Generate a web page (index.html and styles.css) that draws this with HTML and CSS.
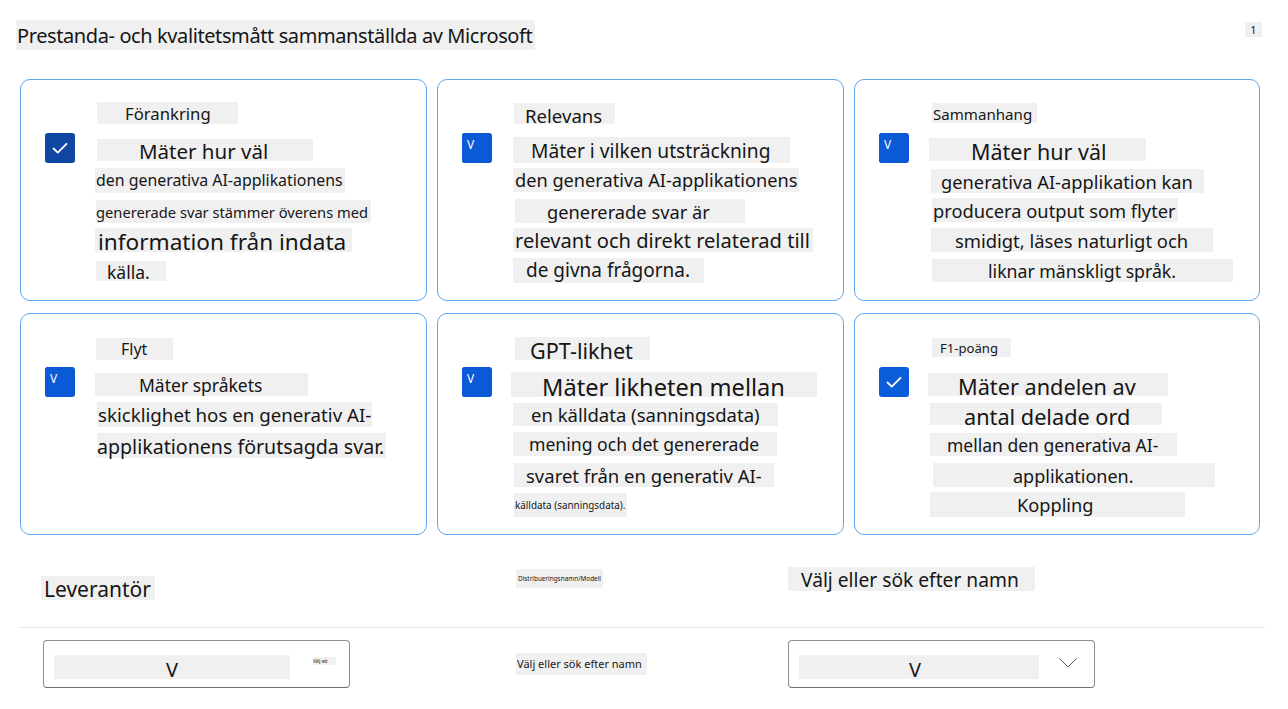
FILE: index.html
```html
<!DOCTYPE html>
<html lang="sv">
<head>
<meta charset="utf-8">
<title>Prestanda- och kvalitetsmått</title>
<link rel="stylesheet" href="styles.css">
</head>
<body>
<div class="page">
  <header class="head">
    <h1 class="title">Prestanda- och kvalitetsmått sammanställda av Microsoft</h1>
    <span class="pgnum">1</span>
  </header>

  <main class="cards">
    <article class="card c1">
      <span class="cb cb-dark"><svg width="30" height="30" viewBox="0 0 30 30"><path d="M8.5 15.5 L12.8 19.6 L21.5 10.8" fill="none" stroke="#fff" stroke-width="1.8" stroke-linecap="round" stroke-linejoin="round"/></svg></span>
      <div class="lines">
        <span class="ln l1">Förankring</span>
        <span class="ln l2">Mäter hur väl</span>
        <span class="ln l3">den generativa AI-applikationens</span>
        <span class="ln l4">genererade svar stämmer överens med</span>
        <span class="ln l5">information från indata</span>
        <span class="ln l6">källa.</span>
      </div>
    </article>

    <article class="card c2">
      <span class="cb cb-v"><span class="cb-in">V</span></span>
      <div class="lines">
        <span class="ln l1">Relevans</span>
        <span class="ln l2">Mäter i vilken utsträckning</span>
        <span class="ln l3">den generativa AI-applikationens</span>
        <span class="ln l4">genererade svar är</span>
        <span class="ln l5">relevant och direkt relaterad till</span>
        <span class="ln l6">de givna frågorna.</span>
      </div>
    </article>

    <article class="card c3">
      <span class="cb cb-v"><span class="cb-in">V</span></span>
      <div class="lines">
        <span class="ln l1">Sammanhang</span>
        <span class="ln l2">Mäter hur väl</span>
        <span class="ln l3">generativa AI-applikation kan</span>
        <span class="ln l4">producera output som flyter</span>
        <span class="ln l5">smidigt, läses naturligt och</span>
        <span class="ln l6">liknar mänskligt språk.</span>
      </div>
    </article>

    <article class="card c4">
      <span class="cb cb-v"><span class="cb-in">V</span></span>
      <div class="lines">
        <span class="ln l1">Flyt</span>
        <span class="ln l2">Mäter språkets</span>
        <span class="ln l3">skicklighet hos en generativ AI-</span>
        <span class="ln l4">applikationens förutsagda svar.</span>
      </div>
    </article>

    <article class="card c5">
      <span class="cb cb-v"><span class="cb-in">V</span></span>
      <div class="lines">
        <span class="ln l1">GPT-likhet</span>
        <span class="ln l2">Mäter likheten mellan</span>
        <span class="ln l3">en källdata (sanningsdata)</span>
        <span class="ln l4">mening och det genererade</span>
        <span class="ln l5">svaret från en generativ AI-</span>
        <span class="ln l6">källdata (sanningsdata).</span>
      </div>
    </article>

    <article class="card c6">
      <span class="cb cb-bright"><svg width="30" height="30" viewBox="0 0 30 30"><path d="M8.5 15.5 L12.8 19.6 L21.5 10.8" fill="none" stroke="#fff" stroke-width="1.8" stroke-linecap="round" stroke-linejoin="round"/></svg></span>
      <div class="lines">
        <span class="ln l1">F1-poäng</span>
        <span class="ln l2">Mäter andelen av</span>
        <span class="ln l3">antal delade ord</span>
        <span class="ln l4">mellan den generativa AI-</span>
        <span class="ln l5">applikationen.</span>
        <span class="ln l6">Koppling</span>
      </div>
    </article>
  </main>

  <section class="filters">
    <div class="frow frow1">
      <span class="prov-label">Leverantör</span>
      <span class="dist-label">Distribueringsnamn/Modell</span>
      <span class="pick-label">Välj eller sök efter namn</span>
    </div>
    <div class="divider"></div>
    <div class="frow frow2">
      <div class="dd dd-left">
        <span class="dd-val">V</span>
        <span class="dd-tiny">Välj ett</span>
      </div>
      <span class="mid-label">Välj eller sök efter namn</span>
      <div class="dd dd-right">
        <span class="dd-val">V</span>
        <svg class="chev" width="20" height="12" viewBox="0 0 20 12"><path d="M1.5 1.5 L10 10 L18.5 1.5" fill="none" stroke="#555" stroke-width="1"/></svg>
      </div>
    </div>
  </section>
</div>
</body>
</html>
```

FILE: styles.css
```css
* { box-sizing: border-box; }

html, body {
  margin: 0;
  padding: 0;
  background: #ffffff;
}

body {
  font-family: "Noto Sans", "Open Sans", "DejaVu Sans", sans-serif;
  color: #161616;
  width: 1288px;
  height: 709px;
  overflow: hidden;
}

.page {
  width: 1288px;
}

/* header */
.head {
  display: flex;
  justify-content: space-between;
  align-items: flex-start;
  padding: 20px 26px 0 16px;
}

.title {
  margin: 0;
  height: 30px;
  line-height: 32px;
  font-size: 20px;
  font-weight: 400;
  letter-spacing: -0.4px;
  background: #f0f0f0;
  padding: 0 1px;
  width: 519px;
  white-space: nowrap;
}

.pgnum {
  margin-top: 2px;
  width: 17px;
  height: 15px;
  line-height: 15px;
  font-size: 11px;
  text-align: center;
  background: #f0f0f0;
}

/* cards */
.cards {
  margin: 29px 0 0 20px;
  width: 1240px;
  display: grid;
  grid-template-columns: 407px 407px 406px;
  grid-template-rows: 222px 222px;
  column-gap: 10px;
  row-gap: 12px;
}

.card {
  border: 1px solid #5fa5ec;
  border-radius: 10px;
  display: flex;
  align-items: flex-start;
  background: #fff;
}

.cb {
  flex: 0 0 auto;
  width: 30px;
  height: 30px;
  margin: 53px 0 0 24px;
  border-radius: 3px;
  display: block;
}

.cb svg { display: block; }

.cb-dark { background: #0f47a3; }
.cb-bright { background: #0b5cd8; }

.cb-v {
  background: #0a58d2;
}

.cb-in {
  display: block;
  width: 25px;
  height: 30px;
  background: #0b5ad6;
  border-radius: 3px 0 0 3px;
  color: #fff;
  font-size: 12px;
  line-height: 1;
  padding: 6px 0 0 5px;
}

.lines {
  display: flex;
  flex-direction: column;
  align-items: flex-start;
  padding-top: 22px;
  margin-left: 20px;
}

.ln {
  display: block;
  background: #f0f0f0;
  white-space: nowrap;
  color: #161616;
}

/* card 1 */
.c1 .l1 { margin: 0 0 0 2px;  width: 141px; height: 22px; line-height: 24px; padding-left: 28px; font-size: 16.7px; }
.c1 .l2 { margin: 15px 0 0 2px; width: 216px; height: 22px; line-height: 25px; padding-left: 42px; font-size: 20.5px; }
.c1 .l3 { margin: 7px 0 0 0;  width: 250px; height: 25px; line-height: 24px; padding-left: 1px; font-size: 15.9px; }
.c1 .l4 { margin: 7px 0 0 1px; width: 275px; height: 23px; line-height: 24px; padding-left: 0; font-size: 14.7px; }
.c1 .l5 { margin: 5px 0 0 0;  width: 257px; height: 24px; line-height: 27px; padding-left: 3px; font-size: 22.6px; }
.c1 .l6 { margin: 9px 0 0 1px; width: 70px;  height: 20px; line-height: 22px; padding-left: 11px; font-size: 17.5px; }

/* card 2 */
.c2 .l1 { margin: 1px 0 0 2px;  width: 101px; height: 21px; line-height: 25px; padding-left: 11px; font-size: 18.6px; }
.c2 .l2 { margin: 13px 0 0 1px; width: 277px; height: 26px; line-height: 27px; padding-left: 18px; font-size: 19.2px; }
.c2 .l3 { margin: 5px 0 0 1px;  width: 286px; height: 24px; line-height: 25px; padding-left: 2px; font-size: 18.2px; }
.c2 .l4 { margin: 7px 0 0 3px;  width: 230px; height: 24px; line-height: 25px; padding-left: 32px; font-size: 18.3px; }
.c2 .l5 { margin: 5px 0 0 1px;  width: 300px; height: 24px; line-height: 26px; padding-left: 2px; font-size: 20.1px; }
.c2 .l6 { margin: 6px 0 0 1px;  width: 191px; height: 25px; line-height: 25px; padding-left: 13px; font-size: 19px; }

/* card 3 */
.c3 .l1 { margin: 1px 0 0 3px;  width: 105px; height: 20px; line-height: 22px; padding-left: 1px; font-size: 15.1px; }
.c3 .l2 { margin: 15px 0 0 0;   width: 217px; height: 23px; line-height: 27px; padding-left: 42px; font-size: 21.5px; }
.c3 .l3 { margin: 8px 0 0 2px;  width: 273px; height: 24px; line-height: 26px; padding-left: 10px; font-size: 18.3px; }
.c3 .l4 { margin: 5px 0 0 3px;  width: 246px; height: 24px; line-height: 25px; padding-left: 1px; font-size: 18.3px; }
.c3 .l5 { margin: 6px 0 0 2px;  width: 282px; height: 24px; line-height: 25px; padding-left: 24px; font-size: 18.4px; }
.c3 .l6 { margin: 7px 0 0 3px;  width: 301px; height: 23px; line-height: 25px; padding-left: 56px; font-size: 17.7px; }

/* card 4 */
.c4 .l1 { margin: 2px 0 0 1px;  width: 77px;  height: 22px; line-height: 23px; padding-left: 25px; font-size: 16px; }
.c4 .l2 { margin: 13px 0 0 0;   width: 213px; height: 23px; line-height: 24px; padding-left: 44px; font-size: 17.5px; }
.c4 .l3 { margin: 6px 0 0 2px;  width: 275px; height: 25px; line-height: 26px; padding-left: 1px; font-size: 18.7px; }
.c4 .l4 { margin: 6px 0 0 2px;  width: 289px; height: 25px; line-height: 27px; padding-left: 0; font-size: 19.6px; }

/* card 5 */
.c5 .l1 { margin: 1px 0 0 3px;  width: 135px; height: 23px; line-height: 28px; padding-left: 15px; font-size: 21.6px; }
.c5 .l2 { margin: 12px 0 0 -1px; width: 306px; height: 25px; line-height: 30px; padding-left: 31px; font-size: 23.6px; }
.c5 .l3 { margin: 6px 0 0 1px;  width: 265px; height: 23px; line-height: 24px; padding-left: 18px; font-size: 18.5px; }
.c5 .l4 { margin: 6px 0 0 1px;  width: 264px; height: 24px; line-height: 25px; padding-left: 16px; font-size: 17.6px; }
.c5 .l5 { margin: 7px 0 0 2px;  width: 260px; height: 24px; line-height: 26px; padding-left: 12px; font-size: 18.5px; }
.c5 .l6 { margin: 6px 0 0 2px;  width: 113px; height: 24px; line-height: 24px; padding-left: 1px; font-size: 9.9px; }

/* card 6 */
.c6 .l1 { margin: 2px 0 0 3px;  width: 79px;  height: 19px; line-height: 20px; padding-left: 8px; font-size: 13.1px; }
.c6 .l2 { margin: 16px 0 0 -1px; width: 240px; height: 23px; line-height: 28px; padding-left: 30px; font-size: 21.7px; }
.c6 .l3 { margin: 7px 0 0 1px;  width: 232px; height: 22px; line-height: 28px; padding-left: 34px; font-size: 21.7px; }
.c6 .l4 { margin: 8px 0 0 1px;  width: 247px; height: 23px; line-height: 24px; padding-left: 17px; font-size: 17.5px; }
.c6 .l5 { margin: 7px 0 0 4px;  width: 282px; height: 24px; line-height: 26px; padding-left: 80px; font-size: 18px; }
.c6 .l6 { margin: 5px 0 0 1px;  width: 255px; height: 25px; line-height: 26px; padding-left: 87px; font-size: 18.2px; }

/* filters */
.filters {
  margin-top: 32px;
}

.frow {
  display: grid;
  grid-template-columns: 475px 272px auto;
  align-items: start;
  padding-left: 41px;
}

.frow1 { height: 33px; }

.prov-label {
  margin-top: 9px;
  width: 114px;
  height: 24px;
  line-height: 27px;
  font-size: 21px;
  padding-left: 3px;
  background: #f0f0f0;
  white-space: nowrap;
}

.dist-label {
  margin-top: 2px;
  width: 87px;
  height: 19px;
  line-height: 19px;
  font-size: 6.4px;
  padding-left: 2px;
  background: #f0f0f0;
  white-space: nowrap;
  overflow: hidden;
}

.pick-label {
  width: 247px;
  height: 24px;
  line-height: 26px;
  font-size: 19.2px;
  padding-left: 13px;
  background: #f0f0f0;
  white-space: nowrap;
}

.divider {
  margin: 27px 0 0 19px;
  width: 1246px;
  height: 1px;
  background: #e3e3e3;
}

.frow2 {
  margin-top: 12px;
}

.dd {
  width: 307px;
  height: 48px;
  border: 1px solid #8f8f8f;
  border-bottom-color: #6f6f6f;
  border-radius: 4px;
  display: flex;
  align-items: flex-start;
  padding: 14px 0 0 10px;
  background: #fff;
}

.dd-left { margin-left: 2px; }

.dd-val {
  width: 236px;
  height: 24px;
  line-height: 30px;
  background: #f0f0f0;
  text-align: center;
  font-size: 20px;
}

.dd-right .dd-val {
  width: 240px;
  padding-right: 8px;
}

.dd-tiny {
  margin: 2px 0 0 23px;
  width: 23px;
  height: 8px;
  line-height: 8px;
  font-size: 4.5px;
  background: #f0f0f0;
  white-space: nowrap;
  overflow: hidden;
}

.chev {
  margin: 2px 0 0 19px;
  display: block;
}

.mid-label {
  margin-top: 13px;
  width: 131px;
  height: 22px;
  line-height: 22px;
  font-size: 11px;
  padding-left: 1px;
  background: #f0f0f0;
  white-space: nowrap;
}
```
